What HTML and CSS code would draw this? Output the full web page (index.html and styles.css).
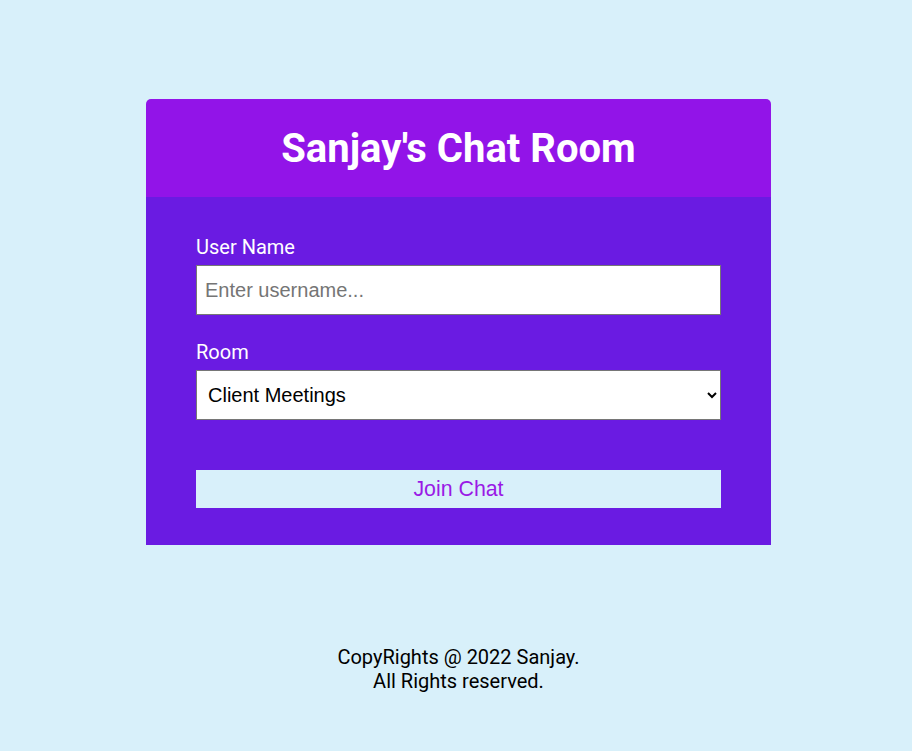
FILE: index.html
```html
<!DOCTYPE html>
<html lang="en">
<head>
<meta charset="utf-8">
<title>Sanjay's Chat Room</title>
<link rel="stylesheet" href="styles.css">
</head>
<body>
  <div class="join-container">
    <header class="join-header">
      <h1>Sanjay's Chat Room</h1>
    </header>
    <main class="join-main">
      <form class="join-form">
        <div class="form-control">
          <label for="username">User Name</label>
          <input type="text" id="username" placeholder="Enter username...">
        </div>
        <div class="form-control">
          <label for="room">Room</label>
          <select id="room">
            <option>Client Meetings</option>
            <option>Team Updates</option>
          </select>
        </div>
        <button type="button" class="btn">Join Chat</button>
      </form>
    </main>
  </div>
  <footer class="footer">
    <p>CopyRights @ 2022 Sanjay.<br>All Rights reserved.</p>
  </footer>
</body>
</html>
```
FILE: styles.css
```css
* { box-sizing: border-box; }
html, body { margin: 0; }
body {
  background: #d8f0fa;
  font-family: Roboto, "Noto Sans", sans-serif;
  padding-left: 5px;
}
.join-container {
  width: 625px;
  margin: 99px auto 0;
}
.join-header {
  height: 98px;
  background: #9214e8;
  border-radius: 5px 5px 0 0;
  display: flex;
  align-items: center;
  justify-content: center;
}
.join-header h1 {
  margin: 0;
  color: #fff;
  font-size: 40px;
  font-weight: 700;
}
.join-main {
  background: #6a1be2;
  padding: 39px 50px 37px;
}
.join-form { display: flex; flex-direction: column; }
.form-control {
  display: flex;
  flex-direction: column;
  margin-bottom: 26px;
}
.form-control label {
  color: #fff;
  font-size: 20px;
  line-height: 23px;
  margin-bottom: 6px;
}
.form-control input,
.form-control select {
  height: 50px;
  width: 100%;
  border: 1px solid #767676;
  background: #fff;
  font-family: "Liberation Sans", Arial, sans-serif;
  font-size: 20px;
  color: #000;
  border-radius: 0;
}
.form-control input { padding: 0 8px; }
.form-control input::placeholder { color: #757575; }
.form-control select { padding: 0 4px 0 7px; }
.btn {
  margin-top: 24px;
  height: 38px;
  width: 100%;
  border: none;
  background: #d8f0fa;
  color: #9a1ae6;
  font-family: "Liberation Sans", Arial, sans-serif;
  font-size: 21.33px;
  cursor: pointer;
}
.footer {
  margin-top: 100px;
  text-align: center;
  color: #000;
  font-size: 20px;
  line-height: 24px;
}
.footer p { margin: 0; }
```
